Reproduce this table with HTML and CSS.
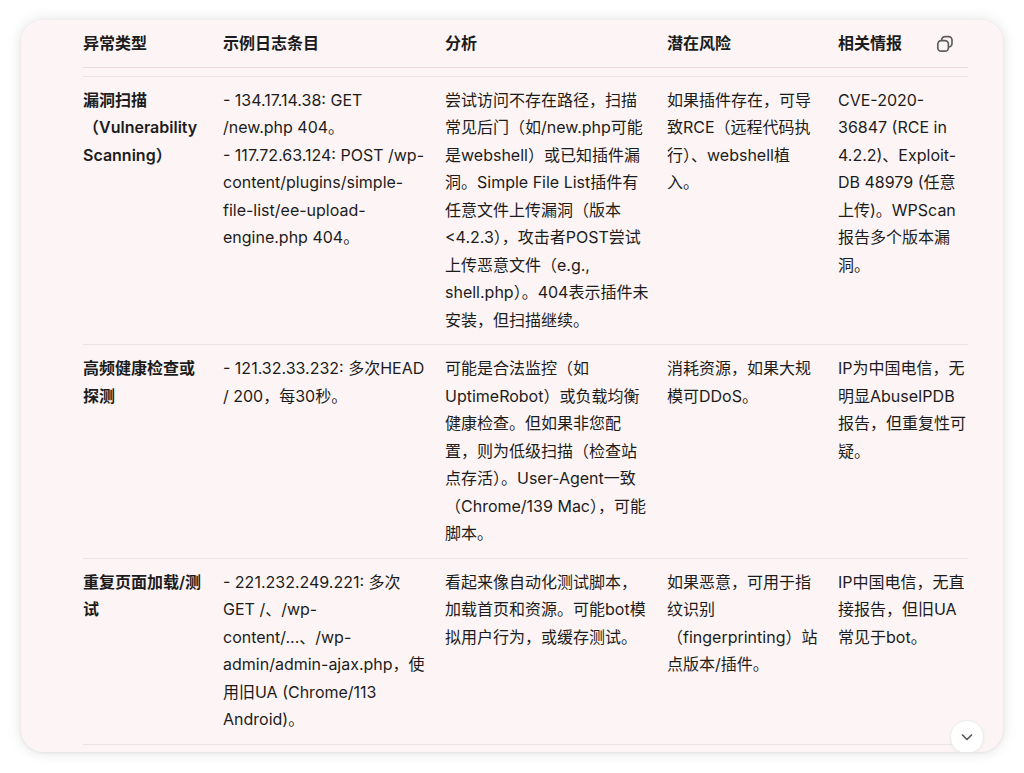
FILE: index.html
```html
<!DOCTYPE html>
<html lang="zh-CN">
<head>
<meta charset="utf-8">
<title>异常类型</title>
<link rel="stylesheet" href="styles.css">
</head>
<body>
<div class="card">
  <table class="grid head">
    <colgroup><col class="c1"><col class="c2"><col class="c3"><col class="c4"><col class="c5"></colgroup>
    <thead>
      <tr><th>异常类型</th><th>示例日志条目</th><th>分析</th><th>潜在风险</th><th>相关情报</th></tr>
    </thead>
  </table>
  <table class="grid body">
    <colgroup><col class="c1"><col class="c2"><col class="c3"><col class="c4"><col class="c5"></colgroup>
    <tbody>
      <tr>
        <td class="kind">漏洞扫描（Vulnerability Scanning）</td>
        <td>- 134.17.14.38: GET /new.php 404。<br>- 117.72.63.124: POST /wp-content/plugins/simple-file-list/ee-upload-engine.php 404。</td>
        <td class="wide">尝试访问不存在路径，扫描常见后门（如/new.php可能是webshell）或已知插件漏洞。Simple File List插件有任意文件上传漏洞（版本&lt;4.2.3），攻击者POST尝试上传恶意文件（e.g., shell.php）。404表示插件未安装，但扫描继续。</td>
        <td>如果插件存在，可导致RCE（远程代码执行）、webshell植入。</td>
        <td>CVE-2020-36847 (RCE in 4.2.2)、Exploit-DB 48979 (任意上传)。WPScan报告多个版本漏洞。</td>
      </tr>
      <tr>
        <td class="kind">高频健康检查或探测</td>
        <td>- 121.32.33.232: 多次HEAD / 200，每30秒。</td>
        <td class="wide">可能是合法监控（如UptimeRobot）或负载均衡健康检查。但如果非您配置，则为低级扫描（检查站点存活）。User-Agent一致（Chrome/139 Mac），可能脚本。</td>
        <td>消耗资源，如果大规模可DDoS。</td>
        <td>IP为中国电信，无明显AbuseIPDB报告，但重复性可疑。</td>
      </tr>
      <tr>
        <td class="kind">重复页面加载/测试</td>
        <td>- 221.232.249.221: 多次GET /、/wp-content/...、/wp-admin/admin-ajax.php，使用旧UA (Chrome/113 Android)。</td>
        <td class="wide">看起来像自动化测试脚本，加载首页和资源。可能bot模拟用户行为，或缓存测试。</td>
        <td>如果恶意，可用于指纹识别（fingerprinting）站点版本/插件。</td>
        <td>IP中国电信，无直接报告，但旧UA常见于bot。</td>
      </tr>
    </tbody>
  </table>
  <button class="copy" aria-label="复制表格">
    <svg width="18" height="18" viewBox="0 0 18 18" fill="none" stroke="#5d5d5d" stroke-width="1.7" stroke-linejoin="round">
      <rect x="1.8" y="5.6" width="10.6" height="10.6" rx="3.4"/>
      <path d="M5.6 5.6V5a3.4 3.4 0 0 1 3.4-3.4h3.6A3.4 3.4 0 0 1 16 5v3.6a3.4 3.4 0 0 1-3.4 3.4h-0.2"/>
    </svg>
  </button>
  <button class="more" aria-label="向下滚动">
    <svg width="16" height="16" viewBox="0 0 16 16" fill="none" stroke="#5a5a5a" stroke-width="1.7" stroke-linecap="round" stroke-linejoin="round">
      <path d="M3.5 6l4.5 4.5L12.5 6"/>
    </svg>
  </button>
</div>
</body>
</html>
```
FILE: styles.css
```css
html, body {
  margin: 0;
  padding: 0;
  background: #ffffff;
}
body {
  padding: 20px 21px 21px 21px;
  font-family: Inter, "Noto Sans CJK SC", sans-serif;
  font-size: 16px;
  color: #1c1c1c;
}
.card {
  position: relative;
  height: 732px;
  box-sizing: border-box;
  padding-left: 62px;
  background: #fdf5f5;
  border-radius: 22px;
  box-shadow: 0 0 14px rgba(0, 0, 0, 0.13), 0 1px 3px rgba(0, 0, 0, 0.06);
  overflow: hidden;
}
.grid {
  width: 885px;
  table-layout: fixed;
  border-collapse: collapse;
}
.c1 { width: 140px; }
.c2 { width: 222px; }
.c3 { width: 222px; }
.c4 { width: 171px; }
.c5 { width: 130px; }
th, td {
  text-align: left;
  vertical-align: top;
  padding: 0 20px 0 0;
  line-height: 27.5px;
}
th:last-child, td:last-child { padding-right: 0; }
.head th {
  font-weight: 700;
  padding-top: 10px;
  padding-bottom: 9px;
  border-bottom: 1px solid #ebdbde;
}
.body {
  margin-top: 8px;
}
.body tr {
  border-top: 1px solid #ece4e4;
  border-bottom: 1px solid #ece4e4;
}
.body td {
  padding-top: 10px;
  padding-bottom: 10px;
}
.body td.wide {
  padding-right: 15.5px;
}
.body td.kind {
  font-weight: 600;
}
.copy {
  position: absolute;
  top: 15px;
  left: 915px;
  width: 18px;
  height: 18px;
  padding: 0;
  border: 0;
  background: transparent;
  display: flex;
  align-items: center;
  justify-content: center;
}
.more {
  position: absolute;
  top: 700px;
  left: 929px;
  width: 34px;
  height: 34px;
  padding: 0;
  border: 1px solid #ececec;
  border-radius: 50%;
  background: #ffffff;
  box-shadow: 0 1px 3px rgba(0, 0, 0, 0.06);
  display: flex;
  align-items: center;
  justify-content: center;
}
```
